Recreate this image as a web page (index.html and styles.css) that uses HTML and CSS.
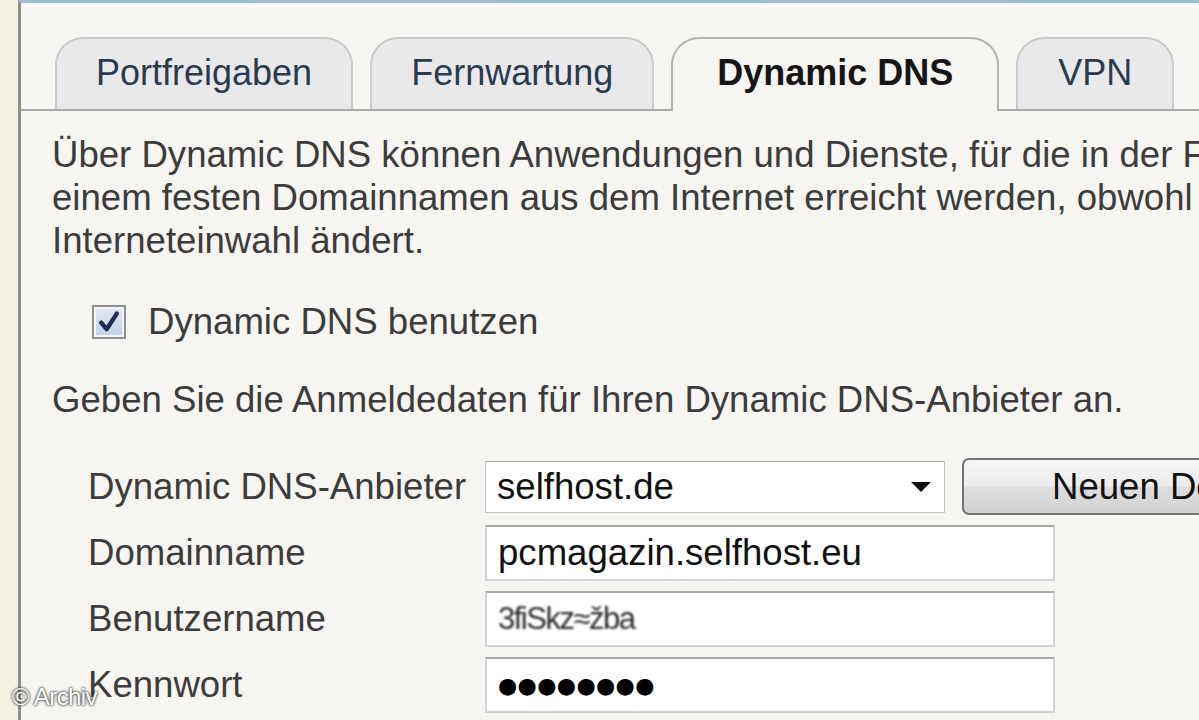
FILE: index.html
```html
<!DOCTYPE html>
<html lang="de">
<head>
<meta charset="utf-8">
<title>Dynamic DNS</title>
<link rel="stylesheet" href="styles.css">
</head>
<body>
<div class="frame">
  <div class="gutter"></div>
  <main class="panel">
    <nav class="tabs">
      <div class="tab">Portfreigaben</div>
      <div class="tab">Fernwartung</div>
      <div class="tab active">Dynamic DNS</div>
      <div class="tab">VPN</div>
    </nav>

    <section class="content">
      <p class="intro">
        <span class="line">Über Dynamic DNS können Anwendungen und Dienste, für die in der FRITZ!Box Portfreigaben eingerichtet wurden, unter</span>
        <span class="line">einem festen Domainnamen aus dem Internet erreicht werden, obwohl sich die öffentliche IP-Adresse mit jeder</span>
        <span class="line">Interneteinwahl ändert.</span>
      </p>

      <label class="check">
        <span class="box">
          <svg viewBox="0 0 20 20" width="24" height="24" aria-hidden="true">
            <path d="M3.5 10.5 L8 16 L16.5 3" fill="none" stroke="#1c2b58" stroke-width="3.6" stroke-linecap="round" stroke-linejoin="round"/>
          </svg>
        </span>
        <span>Dynamic DNS benutzen</span>
      </label>

      <p class="hint">Geben Sie die Anmeldedaten für Ihren Dynamic DNS-Anbieter an.</p>

      <div class="form">
        <div class="label">Dynamic DNS-Anbieter</div>
        <div class="controls">
          <div class="select">
            <span>selfhost.de</span>
            <svg class="arrow" viewBox="0 0 20 10" width="20" height="10" aria-hidden="true">
              <path d="M0 0 H20 L10 10 Z" fill="#111"/>
            </svg>
          </div>
          <div class="button">Neuen Domainnamen</div>
        </div>

        <div class="label">Domainname</div>
        <div class="controls"><div class="field">pcmagazin.selfhost.eu</div></div>

        <div class="label">Benutzername</div>
        <div class="controls"><div class="field"><span class="masked">3fiSkz≈žba</span></div></div>

        <div class="label">Kennwort</div>
        <div class="controls"><div class="field"><span class="dots">●●●●●●●●</span></div></div>
      </div>
    </section>
  </main>
  <div class="credit">© Archiv</div>
</div>
</body>
</html>
```

FILE: styles.css
```css
* {
  box-sizing: border-box;
}

html,
body {
  margin: 0;
}

body {
  width: 1199px;
  height: 720px;
  overflow: hidden;
  background: #f3f2e1;
  font-family: "Liberation Sans", Arial, sans-serif;
}

.frame {
  position: relative;
  display: flex;
  height: 720px;
}

.gutter {
  flex: none;
  width: 18px;
}

.panel {
  flex: 1;
  min-width: 0;
  overflow: hidden;
  background: #f7f5f2;
  border-left: 3px solid #8e8e8a;
  border-top: 3px solid #a3bccb;
}

/* tab strip */
.tabs {
  display: flex;
  align-items: flex-end;
  gap: 17px;
  height: 108px;
  padding-left: 34px;
  border-bottom: 2px solid #a9a9a9;
  background: linear-gradient(#fdfdfc, #f7f5f2 6px);
}

.tab {
  flex: none;
  height: 72px;
  padding: 0 39px;
  border: 2px solid #c9c9c9;
  border-bottom: none;
  border-radius: 28px 28px 0 0;
  background: #e9e9eb;
  color: #2b3b4e;
  font-size: 36px;
  line-height: 68px;
}

.tab:last-child {
  padding: 0 40px;
}

.tab.active {
  height: 74px;
  margin-bottom: -2px;
  padding: 0 44px;
  border-color: #b2b2b2;
  background: #f7f5f2;
  color: #161616;
  font-weight: bold;
}

/* body of the tab */
.content {
  padding-left: 31px;
  color: #3c3c3c;
  font-size: 36.6px;
}

.intro {
  margin: 22px 0 0;
  line-height: 43px;
  white-space: nowrap;
}

.line {
  display: block;
}

.check {
  display: flex;
  align-items: center;
  gap: 22px;
  height: 43px;
  margin: 38px 0 0 40px;
}

.box {
  display: flex;
  align-items: center;
  justify-content: center;
  width: 34px;
  height: 34px;
  border: 2px solid #8f9090;
  background: linear-gradient(#e2e8f2, #c5d0e3);
  box-shadow: inset 0 0 0 2px #f1f3f6;
}

.hint {
  margin: 35px 0 0;
  line-height: 43px;
  white-space: nowrap;
}

/* credentials form */
.form {
  display: grid;
  grid-template-columns: 397px auto;
  row-gap: 10px;
  align-items: center;
  margin: 37px 0 0 36px;
}

.controls {
  display: flex;
  align-items: center;
}

.select {
  display: flex;
  align-items: center;
  justify-content: space-between;
  flex: none;
  width: 460px;
  height: 52px;
  padding: 0 13px 0 11px;
  border: 1px solid #c4c4c4;
  border-top-color: #a2a2a2;
  background: #fff;
  color: #111;
}

.button {
  flex: none;
  width: 320px;
  height: 57px;
  margin-left: 17px;
  padding-left: 88px;
  border: 2px solid #747474;
  border-radius: 7px;
  background: linear-gradient(#f6f6f6, #ececec 48%, #dddddd 52%, #d2d2d2);
  color: #111;
  line-height: 53px;
  white-space: nowrap;
}

.field {
  display: flex;
  align-items: center;
  flex: none;
  width: 570px;
  height: 56px;
  padding-left: 11px;
  border: 2px solid #d3d3d3;
  border-top-color: #a8a8a8;
  background: #fff;
  color: #111;
  white-space: nowrap;
}

/* the user name is shown scrambled */
.masked {
  font-size: 31px;
  letter-spacing: -1.5px;
  color: #2a2a2a;
  filter: blur(1.1px);
}

.dots {
  font-family: "DejaVu Sans", sans-serif;
  font-size: 22px;
  letter-spacing: 0.4px;
  color: #000;
}

.credit {
  position: absolute;
  left: 12px;
  top: 683px;
  color: #fff;
  font-size: 24px;
  letter-spacing: -0.6px;
  text-shadow: 0 0 2px #333, 0 0 3px #333;
}
```
